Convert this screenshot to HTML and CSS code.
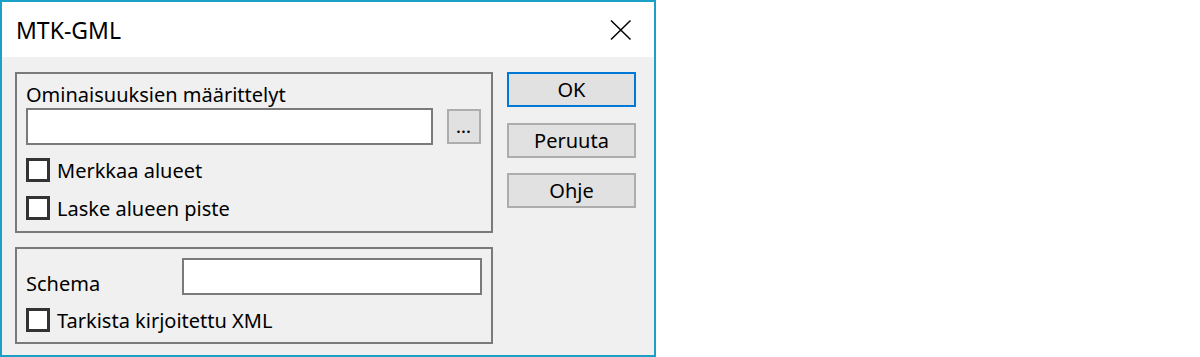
FILE: index.html
```html
<!DOCTYPE html>
<html>
<head>
<meta charset="utf-8">
<link rel="stylesheet" href="styles.css">
</head>
<body>
<div class="dialog">
  <div class="titlebar">
    <span class="title">MTK-GML</span>
    <svg class="close" width="22" height="22" viewBox="0 0 22 22"><path d="M1 1.5 L20.5 20.5 M20.5 1.5 L1 20.5" stroke="#000" stroke-width="1.5" fill="none"/></svg>
  </div>
  <div class="body">
    <div class="left">
      <div class="group g1">
        <div class="label">Ominaisuuksien määrittelyt</div>
        <div class="inputrow">
          <div class="input wide"></div>
          <div class="browse">...</div>
        </div>
        <div class="check first"><span class="box"></span><span class="ctext">Merkkaa alueet</span></div>
        <div class="check second"><span class="box"></span><span class="ctext">Laske alueen piste</span></div>
      </div>
      <div class="group g2">
        <div class="schemarow">
          <span class="slabel">Schema</span>
          <div class="input schema"></div>
        </div>
        <div class="check third"><span class="box"></span><span class="ctext">Tarkista kirjoitettu XML</span></div>
      </div>
    </div>
    <div class="buttons">
      <div class="btn default">OK</div>
      <div class="btn b2">Peruuta</div>
      <div class="btn b3">Ohje</div>
    </div>
  </div>
</div>
</body>
</html>
```
FILE: styles.css
```css
html, body {
  margin: 0;
  padding: 0;
  background: #ffffff;
}
body {
  font-family: "Noto Sans", "Open Sans", sans-serif;
  font-size: 20px;
  color: #000;
}
.dialog {
  box-sizing: border-box;
  width: 656px;
  height: 357px;
  border: 2px solid #1ba1c6;
  display: flex;
  flex-direction: column;
  background: #f0f0f0;
}
.titlebar {
  height: 55px;
  background: #ffffff;
  display: flex;
  align-items: center;
  justify-content: space-between;
  padding: 1px 22px 0 14px;
  box-sizing: border-box;
}
.title {
  font-size: 23px;
  line-height: 26px;
}
.close {
  display: block;
  margin-top: -1px;
}
.body {
  flex: 1;
  display: flex;
  padding: 15px 0 0 13px;
  gap: 14px;
}
.left {
  width: 478px;
  display: flex;
  flex-direction: column;
  gap: 14px;
}
.group {
  box-sizing: border-box;
  border: 2px solid #7a7a7a;
  padding: 0 8px 0 9px;
}
.g1 {
  height: 161px;
  padding-top: 9px;
}
.g2 {
  height: 97px;
  padding-top: 9px;
}
.label {
  line-height: 24px;
  height: 24px;
}
.inputrow {
  margin-top: 1px;
  display: flex;
  align-items: center;
  gap: 14px;
}
.input {
  box-sizing: border-box;
  background: #ffffff;
  border: 2px solid #7a7a7a;
  height: 37px;
}
.wide {
  width: 407px;
}
.browse {
  box-sizing: border-box;
  width: 34px;
  height: 35px;
  background: #e1e1e1;
  border: 2px solid #adadad;
  font-size: 14px;
  line-height: 14px;
  text-align: center;
  display: flex;
  align-items: flex-end;
  justify-content: center;
  padding-bottom: 7px;
  font-weight: bold;
  letter-spacing: 1px;
}
.check {
  display: flex;
  align-items: center;
  gap: 7px;
  height: 24px;
}
.first {
  margin-top: 13px;
}
.second {
  margin-top: 14px;
}
.third {
  margin-top: 13px;
}
.box {
  box-sizing: border-box;
  width: 24px;
  height: 24px;
  background: #ffffff;
  border: 3px solid #333333;
}
.ctext {
  line-height: 24px;
  padding-top: 1px;
}
.schemarow {
  display: flex;
  align-items: flex-end;
  height: 37px;
}
.slabel {
  width: 156px;
  line-height: 24px;
  margin-bottom: -1px;
}
.schema {
  width: 300px;
}
.buttons {
  display: flex;
  flex-direction: column;
  width: 129px;
}
.btn {
  box-sizing: border-box;
  height: 35px;
  background: #e1e1e1;
  border: 2px solid #adadad;
  display: flex;
  align-items: center;
  justify-content: center;
  line-height: 24px;
  padding-top: 1px;
}
.default {
  border-color: #0078d7;
}
.b2 {
  margin-top: 16px;
}
.b3 {
  margin-top: 15px;
}
```
